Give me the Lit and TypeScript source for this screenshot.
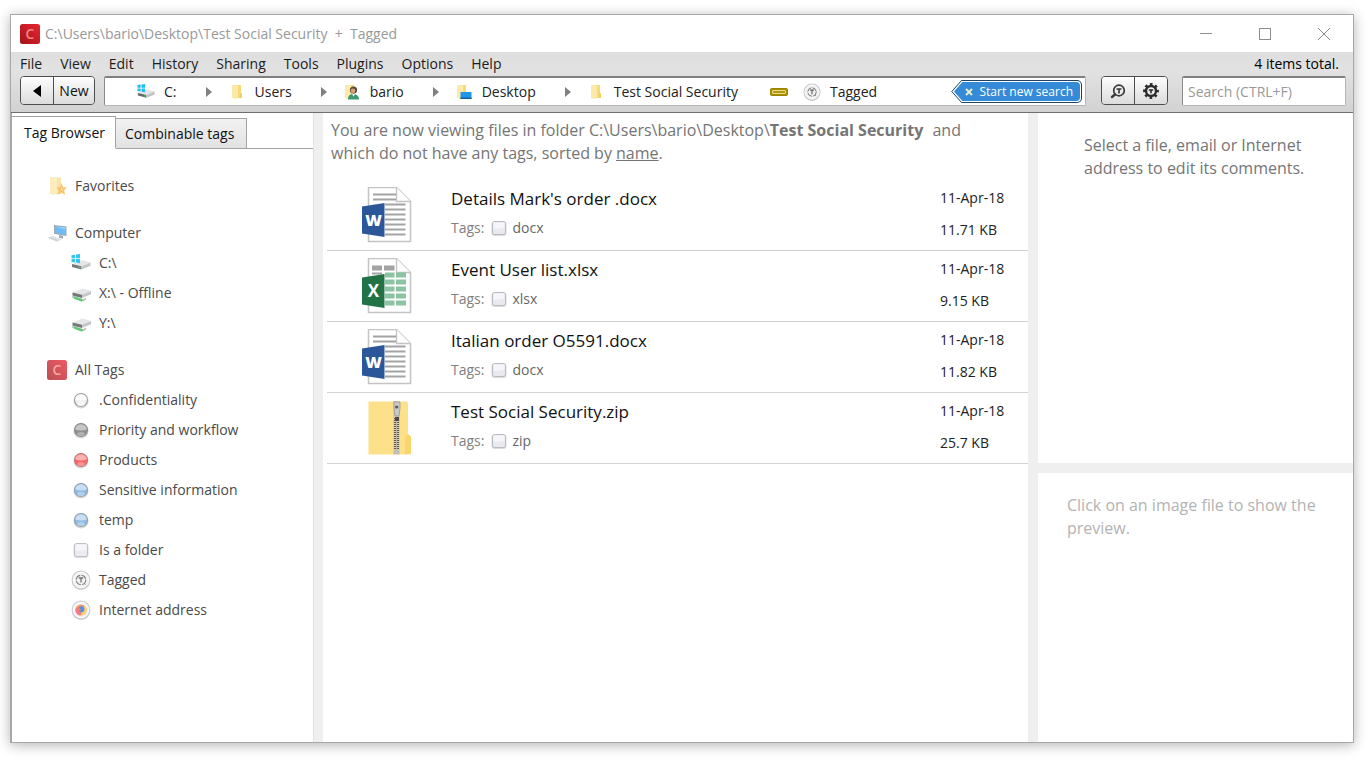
import { LitElement, html, svg, css, nothing } from "lit";
import { customElement, state } from "lit/decorators.js";

type IconName = string;

const folderBody = svg`
  <path d="M1 1h9v13H1z" fill="#f9d978"/>
  <path d="M1 1h5l1 1v11l-2 2-4-1z" fill="#fdeaa9"/>
  <path d="M9 8.500l2 1v4.500H9z" fill="#f5cf63"/>`;

const driveBody = svg`
  <path d="M1 11l10-4 8.500 2.500-9 3.800z" fill="#e3e4e6"/>
  <path d="M1 11l9.500 2.300v3.200L1 13.900z" fill="#66686b"/>
  <path d="M19.500 9.500v3.200l-9 3.800v-3.200z" fill="#bfc0c3"/>`;

const winFlag = svg`<path d="M.5 2.200l3.600-.5v3.500H.5zM5 1.600l4-.6v4.200H5zM.5 6h3.600v3.500L.5 9zM5 6h4v4.200l-4-.6z" fill="#1fbff2"/>`;

const logoTile = svg`
  <defs><linearGradient id="tile" x1="0" y1="1" x2="1" y2="0">
    <stop offset="0" stop-color="#a3141a"/><stop offset="1" stop-color="#ea2430"/></linearGradient></defs>
  <rect width="20" height="20" rx="2.500" fill="url(#tile)"/>
  <text x="10" y="15" text-anchor="middle" font-family="Open Sans, sans-serif" font-size="14" font-weight="600" fill="#f08b86">C</text>`;

const orb = (light: string, dark: string, rim: string) => svg`
  <circle cx="10" cy="10.800" r="7.600" fill="#000" opacity=".16"/>
  <circle cx="10" cy="10" r="6.500" fill="${dark}" stroke="${rim}" stroke-width="1.100"/>
  <path d="M4.200 9.600a5.800 5.300 0 0 1 11.600 0q-5.800 1.800-11.600 0z" fill="${light}"/>
  <ellipse cx="10" cy="14" rx="3.800" ry="2" fill="${light}" opacity=".6"/>`;

const badge = svg`
  <circle cx="10" cy="10.900" r="9.100" fill="#000" opacity=".2"/>
  <circle cx="10" cy="10" r="8.800" fill="#f1f1f3" stroke="#c6c6c8" stroke-width="1.200"/>
  <circle cx="10" cy="10" r="7.800" fill="none" stroke="#fff" stroke-width=".8"/>`;

const page = svg`
  <path d="M7.500.5h28l14 14v40h-42z" fill="#fff" stroke="#c4c4c4" stroke-width="1.500"/>
  <path d="M35.500.5v14h14" fill="#fdfdfd" stroke="#c4c4c4" stroke-width="1.300"/>`;

const wordPage = svg`${page}
  <path d="M12 7.500h23M12 12.500h23M24 17.500h20.500M24 22.500h20.500M24 27.500h20.500M24 32.500h20.500M24 37.500h20.500M24 42.500h20.500M24 47.500h20.500" stroke="#a3a3a3" stroke-width="2"/>
  <path d="M1 19.500L23.500 16v34L1 46.500z" fill="#2b579a"/>
  <text x="12.500" y="38.500" text-anchor="middle" font-family="Open Sans, sans-serif" font-size="16" font-weight="800" fill="#fff">W</text>`;

const excelPage = svg`${page}
  <path d="M11 7.500h10v5H11zM23 7.500h10.500v5H23zM11 14.500h10v2H11z" fill="#a3a3a3"/>
  <path d="M24 14.500h9.500v5H24zM35 14.500h10v5H35zM24 21.500h9.500v5H24zM35 21.500h10v5H35zM24 28.500h9.500v5H24zM35 28.500h10v5H35zM24 35.500h9.500v5H24zM35 35.500h10v5H35zM24 42.500h9.500v5H24zM35 42.500h10v5H35z" fill="#8bc3a3"/>
  <path d="M1 19.500L23.500 16v34L1 46.500z" fill="#217346"/>
  <text x="12.500" y="38.500" text-anchor="middle" font-family="Open Sans, sans-serif" font-size="17" font-weight="700" fill="#fff">X</text>`;

const zipFolder = svg`
  <path d="M7.500 1.500h38a2 2 0 0 1 1.500 2v31l3 2v16a2 2 0 0 1-2 2H7.500z" fill="#fde08a"/>
  <path d="M44 54V37l3-3 3 2.500V52a2 2 0 0 1-2 2z" fill="#fbd56c"/>
  <rect x="32" y="1" width="7" height="53.500" fill="#d9cfae"/>
  <path d="M35.500 18v32" stroke="#5b574c" stroke-width="5" stroke-dasharray="1 1"/>
  <path d="M35.500 18v32" stroke="#b9b4a4" stroke-width="1"/>
  <path d="M33 2h6v6l-1 8h-4l-1-8z" fill="#c9cacc" stroke="#8f9092" stroke-width=".7"/>
  <circle cx="35.700" cy="7" r="1.600" fill="#55565a"/>
  <path d="M34 17h4v4h-4z" fill="#4b4b4b"/>
  <rect x="33" y="50" width="5" height="4" rx="1" fill="#bdbdbb"/>`;

const glyphs: Record<IconName, { box: string; body: unknown }> = {
  logo: { box: "0 0 20 20", body: logoTile },
  folder: { box: "0 0 12 16", body: folderBody },
  drive: { box: "0 0 20 20", body: svg`${driveBody}<circle cx="8.500" cy="14.300" r="1" fill="#37c04a"/>${winFlag}` },
  netDrive: {
    box: "0 0 20 20",
    body: svg`<path d="M1 13.500l11 4 3-2" stroke="#bcbec0" stroke-width="2" fill="none"/>
      <path d="M3 13.200l9 3-1 2.600-8-3z" fill="#52c566"/>
      <g transform="translate(.5 -1.500)">${driveBody}</g>`,
  },
  userFolder: {
    box: "0 0 16 16",
    body: svg`${folderBody}
      <circle cx="9.500" cy="6" r="3.600" fill="#5d4a3c"/><circle cx="9" cy="6.800" r="2.300" fill="#d9a27c"/>
      <path d="M4 15.500c0-4 2-5.500 5-5.500s6 1.500 6 5.500z" fill="#3d9a75"/><path d="M8 10l1.500 2.500L11 10z" fill="#fff"/>`,
  },
  desktopFolder: {
    box: "0 0 16 16",
    body: svg`${folderBody}<rect x="4.500" y="8" width="11" height="7" fill="#2196e8"/><path d="M4.500 13.500h11V15h-11z" fill="#0b62a8"/>`,
  },
  favorites: {
    box: "0 0 20 20",
    body: svg`<path d="M3 1.500h11V18H3z" fill="#f9dc8e"/><path d="M3 1.500h6l1 1V17l-3 2-4-1.500z" fill="#fde7a6"/>
      <path d="M14.500 7l1.600 4.200 4 .3-3 2.800 1 4.700-3.600-2.500-4 2.300 1.300-4.500-2.600-2.500 3.900-.5z" fill="#f6b040"/>
      <path d="M14 9.500l.8 3 2.400.4-3 2z" fill="#fbd58a"/>`,
  },
  computer: {
    box: "0 0 20 20",
    body: svg`<path d="M7 2l12.500 1.600V13L7 10.800z" fill="#7d8995"/><path d="M8 3.200l10.500 1.400v7.100L8 9.700z" fill="#3fa6f2"/>
      <path d="M8 3.200l10.500 1.400v2z" fill="#7cc8fb"/><path d="M12 12l4 .8v3l-4-1z" fill="#858e97"/>
      <path d="M0 14.500l6-1.500 9 3.500-5.500 2.200z" fill="#d3d7dc"/><path d="M2 14.700l9 3" stroke="#a9aeb5" stroke-width=".6"/>`,
  },
  orbWhite: { box: "0 0 20 20", body: orb("#fbfbfc", "#eeeef2", "#969698") },
  orbGrey: { box: "0 0 20 20", body: orb("#c0c0c0", "#858585", "#7f7f7f") },
  orbRed: { box: "0 0 20 20", body: orb("#fba9a9", "#f95454", "#b07070") },
  orbBlue: { box: "0 0 20 20", body: orb("#c3dbf1", "#86b4e0", "#8496a8") },
  square: {
    box: "0 0 20 20",
    body: svg`<rect x="2.500" y="3.500" width="15" height="14.500" rx="3" fill="#000" opacity=".14"/>
      <rect x="3.500" y="3.500" width="13" height="13" rx="2.200" fill="#e9e9f0" stroke="#b9b9c0"/>
      <path d="M4.500 4.500h11v5q-5 1.600-11 1z" fill="#f6f6fa"/>`,
  },
  tagged: {
    box: "0 0 20 20",
    body: svg`${badge}<circle cx="10" cy="10" r="4.700" fill="none" stroke="#747474" stroke-width="1.100" stroke-dasharray="6 1.380"/>
      <path d="M7.800 8h4.400M10 8v4.500" stroke="#666" stroke-width="1.300"/><path d="M13.500 13.500l1.200 1" stroke="#747474"/>`,
  },
  internet: {
    box: "0 0 20 20",
    body: svg`${badge}<circle cx="10" cy="10" r="5.600" fill="#f88a5c"/><path d="M10 15.600A5.600 5.600 0 0 0 13.500 5.600l-2 4.500z" fill="#fbcf5a"/>
      <path d="M4.600 8.500A5.600 5.600 0 0 0 9 15.500l1-3z" fill="#f76b8f"/><circle cx="10.400" cy="9.300" r="3" fill="#3f86e4"/>
      <path d="M5.500 8q3-1.500 4.500 2.200l-3 1.800z" fill="#f8705a"/>`,
  },
  pill: {
    box: "0 0 18 8",
    body: svg`<rect x=".5" y=".5" width="17" height="7" rx="1" fill="#a98f00" stroke="#9c8400"/><rect x="2.500" y="2.500" width="13" height="3" rx=".5" fill="#b39a10" stroke="#f0e39a" stroke-width=".9"/>`,
  },
  arrow: { box: "0 0 6 10", body: svg`<path d="M0 0l6 5-6 5z" fill="#808080"/>` },
  back: { box: "0 0 8 14", body: svg`<path d="M8 1v12L0 7z" fill="#000"/>` },
  find: {
    box: "0 0 16 16",
    body: svg`<circle cx="9" cy="7.500" r="5.300" fill="none" stroke="#3a3a3a" stroke-width="1.700"/>
      <path d="M6.500 6h5M9 6v4.500" stroke="#3a3a3a" stroke-width="1.700"/><path d="M5 11.500l-3 2.500" stroke="#3a3a3a" stroke-width="2.400" stroke-linecap="round"/>`,
  },
  gear: {
    box: "0 0 16 16",
    body: svg`<circle cx="8" cy="8" r="6.700" fill="none" stroke="#2b2b2b" stroke-width="2.400" stroke-dasharray="2.630 2.630" stroke-dashoffset="1.300"/>
      <circle cx="8" cy="8" r="5" fill="none" stroke="#2b2b2b" stroke-width="2.400"/><path d="M5.800 7h4.400M8 7v3.200" stroke="#2b2b2b" stroke-width="1.600"/>`,
  },
  minimize: { box: "0 0 12 12", body: svg`<path d="M0 5.500h12" stroke="#8d8d8d"/>` },
  maximize: { box: "0 0 12 12", body: svg`<rect x=".5" y=".5" width="11" height="11" fill="none" stroke="#8d8d8d"/>` },
  close: { box: "0 0 12 12", body: svg`<path d="M0 0l12 12M12 0L0 12" stroke="#8d8d8d"/>` },
  cross: { box: "0 0 8 8", body: svg`<path d="M1 1l6 6M7 1L1 7" stroke="#e9efc9" stroke-width="1.900"/>` },
  pointer: {
    box: "0 0 12 23",
    body: svg`<path d="M12 .5H10.500L.8 11.500l9.700 11H12" fill="#fff" stroke="#1d4266"/><path d="M12 2h-.6L3 11.500l8.400 9.500H12z" fill="#368bd8"/>`,
  },
  word: { box: "0 0 52 56", body: wordPage },
  excel: { box: "0 0 52 56", body: excelPage },
  zip: { box: "0 0 52 56", body: zipFolder },
};

const icon = (name: IconName) => {
  const [, , w, h] = glyphs[name].box.split(" ");
  return html`<svg class="icon" viewBox=${glyphs[name].box} width=${w} height=${h} aria-hidden="true">${glyphs[name].body}</svg>`;
};

@customElement("tag-tree")
class TagTree extends LitElement {
  static styles = css`
    :host { display: block; }
    .group { list-style: none; margin: 0 0 17px; padding: 0; }
    .row { display: flex; align-items: center; gap: 8px; height: 30px; color: #4a4a4a; text-decoration: none; white-space: nowrap; }
    .child { padding-left: 24px; }
    .icon { display: block; flex: none; opacity: 0.9; }
    .head .icon { opacity: 0.75; }
  `;
  groups = [
    { icon: "favorites", label: "Favorites", items: [] },
    {
      icon: "computer", label: "Computer",
      items: [["drive", "C:\\"], ["netDrive", "X:\\ - Offline"], ["netDrive", "Y:\\"]],
    },
    {
      icon: "logo", label: "All Tags",
      items: [
        ["orbWhite", ".Confidentiality"], ["orbGrey", "Priority and workflow"], ["orbRed", "Products"],
        ["orbBlue", "Sensitive information"], ["orbBlue", "temp"], ["square", "Is a folder"],
        ["tagged", "Tagged"], ["internet", "Internet address"],
      ],
    },
  ];
  render() {
    return this.groups.map(
      (g) => html`<ul class="group">
        <li class="head"><a class="row" href="#">${icon(g.icon)}<span>${g.label}</span></a></li>
        ${g.items.map(([i, label]) => html`<li><a class="row child" href="#">${icon(i)}<span>${label}</span></a></li>`)}
      </ul>`
    );
  }
}

@customElement("file-list")
class FileList extends LitElement {
  static styles = css`
    :host { display: block; }
    .list { list-style: none; margin: 0; padding: 0; }
    .file { display: grid; grid-template-columns: 124px 1fr 88px; height: 71px; border-bottom: 1px solid #d3d3d3; box-sizing: border-box; }
    .thumb { padding: 7px 0 0 34px; }
    .icon { display: block; flex: none; }
    .info { min-width: 0; padding-top: 7px; }
    .name { display: block; font-size: 17px; line-height: 24px; color: #111; text-decoration: none; white-space: nowrap; }
    .tags { display: flex; align-items: center; height: 20px; margin-top: 7px; color: #808080; }
    .tags .icon { margin: 0 3px 0 5px; }
    .tag { color: #666; text-decoration: none; }
    .meta { display: flex; flex-direction: column; gap: 12px; padding-top: 8px; line-height: 20px; color: #222; white-space: nowrap; }
  `;
  files = [
    ["word", "Details Mark's order .docx", "docx", "11-Apr-18", "11.71 KB"],
    ["excel", "Event User list.xlsx", "xlsx", "11-Apr-18", "9.15 KB"],
    ["word", "Italian order O5591.docx", "docx", "11-Apr-18", "11.82 KB"],
    ["zip", "Test Social Security.zip", "zip", "11-Apr-18", "25.7 KB"],
  ];
  render() {
    return html`<ul class="list">
      ${this.files.map(
        ([kind, name, tag, date, size]) => html`<li class="file">
          <div class="thumb">${icon(kind)}</div>
          <div class="info">
            <a class="name" href="#">${name}</a>
            <div class="tags"><span>Tags:</span>${icon("square")}<a class="tag" href="#">${tag}</a></div>
          </div>
          <div class="meta"><span>${date}</span><span>${size}</span></div>
        </li>`
      )}
    </ul>`;
  }
}

@customElement("app-root")
class AppRoot extends LitElement {
  static styles = css`
    :host {
      display: block; box-sizing: border-box; height: 100vh; padding: 14px 14px 16px 10px; background: #fff;
      font-family: "Open Sans", "Noto Sans", sans-serif; font-size: 14px; line-height: 20px; color: #111;
    }
    * { box-sizing: border-box; }
    button, input { font: inherit; color: inherit; margin: 0; }
    .icon { display: block; flex: none; }
    .window { display: flex; flex-direction: column; height: 100%; border: 1px solid #a8a8a8; background: #fff; box-shadow: 0 2px 12px rgba(0, 0, 0, 0.3); }
    .title { display: flex; align-items: center; gap: 5px; height: 37px; padding-left: 9px; color: #999; }
    .caption { flex: 1; white-space: pre; }
    .controls { display: flex; }
    .control { display: flex; align-items: center; justify-content: center; width: 59px; height: 36px; padding: 0; border: 0; background: none; }
    .bars { background: linear-gradient(#dedede, #e2e2e2 30%, #d2d2d2); border-bottom: 1px solid #6f6f6f; }
    .menu { display: flex; align-items: center; gap: 18px; height: 24px; padding: 0 14px 0 9px; }
    .menu-item { padding: 0; border: 0; background: none; line-height: 20px; color: #1c1c1c; }
    .total { margin-left: auto; color: #000; }
    .tools { display: flex; height: 36px; padding: 0 7px 0 9px; }
    .pair { display: flex; flex: none; height: 29px; border: 1px solid #4d4d4d; border-radius: 4px; overflow: hidden; }
    .tool { display: flex; align-items: center; justify-content: center; width: 32px; padding: 0; border: 0; background: linear-gradient(#fdfdfd, #dcdcdc); }
    .tool + .tool { width: 33px; border-left: 1px solid #4d4d4d; }
    .tool + .new { width: 41px; }
    .path { display: flex; flex: 1; align-items: center; min-width: 0; height: 30px; margin: 0 15px 0 9px; padding: 0 3px 0 31px; border: 1px solid #b5b5b5; border-top: 2px solid #808080; border-left-color: #8a8a8a; border-radius: 2px; background: #fff; }
    .crumb { display: flex; align-items: center; gap: 8px; color: #222; text-decoration: none; white-space: nowrap; }
    .slot { display: flex; justify-content: center; width: 20px; }
    .slot .icon { max-width: 18px; max-height: 18px; }
    .sep { display: flex; padding: 0 15px 0 29px; }
    .link { display: flex; padding: 0 14px 0 32px; }
    .start { display: flex; height: 23px; margin-left: auto; padding: 0; border: 0; background: none; }
    .start-edge { display: flex; align-items: center; height: 23px; padding: 0 1px 0 0; border: 1px solid #1d4266; border-left: 0; border-radius: 0 5px 5px 0; background: #fff; }
    .start-body { display: flex; align-items: center; gap: 7px; height: 19px; padding: 0 7px 0 2px; border-radius: 0 4px 4px 0; background: #368bd8; color: #fff; font-size: 12px; white-space: nowrap; }
    .search { width: 164px; height: 30px; margin-left: 14px; padding: 0 5px; border: 1px solid #b5b5b5; border-top: 2px solid #808080; border-left-color: #8a8a8a; border-radius: 2px; background: #fff; }
    .search::placeholder { color: #999; opacity: 1; }
    .body { display: grid; grid-template-columns: 302px minmax(0, 1fr) 315px; column-gap: 10px; flex: 1; min-height: 0; background: #efefef; }
    .side { border-left: 1px solid #a8a8a8; box-shadow: 1px 0 #e2e2e2; background: #fff; }
    .tabs { display: flex; align-items: flex-end; height: 36px; }
    .tab { height: 31px; padding: 0 12px 0 9px; border: 1px solid #a3a3a3; border-left: 0; background: linear-gradient(#f2f2f2, #e2e2e2); white-space: nowrap; }
    .tab.active { height: 33px; padding: 0 10px 0 12px; background: #fff; border-bottom-color: #fff; }
    .tabs-rest { flex: 1; border-bottom: 1px solid #a3a3a3; }
    .tree { padding: 22px 0 0 35px; }
    .main { padding-left: 4px; background: #fff; min-width: 0; }
    .summary { margin: 0; padding: 6px 56px 15px 4px; font-size: 16px; line-height: 23px; color: #757575; }
    .summary b { margin-right: 5px; }
    .summary a { color: inherit; }
    .right { display: grid; grid-template-rows: minmax(0, 350fr) minmax(0, 269fr); row-gap: 10px; font-size: 16px; line-height: 23px; }
    .comments { padding: 21px 30px 0 46px; background: #fff; color: #757575; }
    .preview { padding: 21px 14px 0 29px; background: #fff; color: #b3b3b3; }
    .note { margin: 0; }
  `;

  @state() private tab = "Tag Browser";

  private menus = ["File", "View", "Edit", "History", "Sharing", "Tools", "Plugins", "Options", "Help"];
  private crumbs = [
    ["drive", "C:"], ["folder", "Users"], ["userFolder", "bario"], ["desktopFolder", "Desktop"], ["folder", "Test Social Security"],
  ];

  render() {
    return html`<div class="window">
      <header class="title">
        ${icon("logo")}
        <span class="caption">${"C:\\Users\\bario\\Desktop\\Test Social Security  +  Tagged"}</span>
        <div class="controls">
          ${["minimize", "maximize", "close"].map((c) => html`<button class="control" aria-label=${c}>${icon(c)}</button>`)}
        </div>
      </header>
      <div class="bars">
        <nav class="menu">
          ${this.menus.map((m) => html`<button class="menu-item">${m}</button>`)}
          <span class="total">4 items total.</span>
        </nav>
        <div class="tools">
          <div class="pair">
            <button class="tool" aria-label="Back">${icon("back")}</button>
            <button class="tool new">New</button>
          </div>
          <div class="path">
            ${this.crumbs.map(
              ([i, label], n) => html`${n ? html`<span class="sep">${icon("arrow")}</span>` : nothing}
                <a class="crumb" href="#"><span class="slot">${icon(i)}</span>${label}</a>`
            )}
            <span class="link">${icon("pill")}</span>
            <a class="crumb" href="#"><span class="slot">${icon("tagged")}</span>Tagged</a>
            <button class="start">
              ${icon("pointer")}<span class="start-edge"><span class="start-body">${icon("cross")}Start new search</span></span>
            </button>
          </div>
          <div class="pair">
            <button class="tool" aria-label="Find tag">${icon("find")}</button>
            <button class="tool" aria-label="Tag settings">${icon("gear")}</button>
          </div>
          <input class="search" type="search" aria-label="Search" placeholder="Search (CTRL+F)" />
        </div>
      </div>
      <div class="body">
        <aside class="side">
          <div class="tabs">
            ${["Tag Browser", "Combinable tags"].map(
              (t) => html`<button class="tab ${t === this.tab ? "active" : ""}" @click=${() => (this.tab = t)}>${t}</button>`
            )}
            <span class="tabs-rest"></span>
          </div>
          <tag-tree class="tree"></tag-tree>
        </aside>
        <main class="main">
          <p class="summary">You are now viewing files in folder C:\\Users\\bario\\Desktop\\<b>Test Social Security</b> and which do not have any tags, sorted by <a href="#">name</a>.</p>
          <file-list></file-list>
        </main>
        <div class="right">
          <section class="comments"><p class="note">Select a file, email or Internet address to edit its comments.</p></section>
          <section class="preview"><p class="note">Click on an image file to show the preview.</p></section>
        </div>
      </div>
    </div>`;
  }
}
